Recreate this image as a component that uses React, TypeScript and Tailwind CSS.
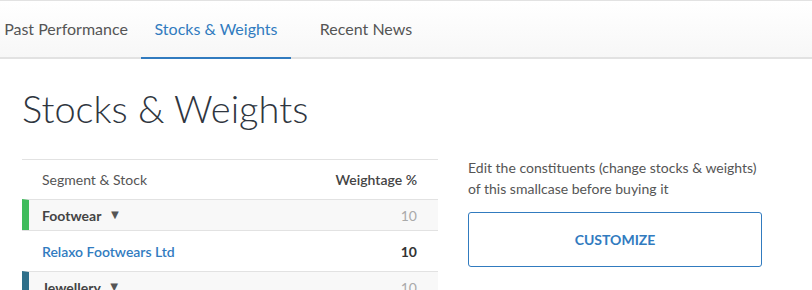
export default function App() {
  const tabs = ["Past Performance", "Stocks & Weights", "Recent News"];

  return (
    <div className="w-[812px] h-[290px] overflow-hidden bg-white font-['Lato',sans-serif] text-[#333]">
      <nav className="flex h-[59px] border-t border-[#e2e2e2] border-b-2 bg-gradient-to-b from-white to-[#f7f7f7]">
        <div className="-ml-[9px] flex">
          {tabs.map((t, i) => (
            <div
              key={t}
              className={[
                "-mb-[2px] flex w-[150px] items-center justify-center pb-[1px] text-[16px]",
                i === 1
                  ? "border-b-2 border-[#317bbf] text-[#317bbf]"
                  : "border-b-2 border-transparent text-[#555]",
              ].join(" ")}
            >
              {t}
            </div>
          ))}
        </div>
      </nav>

      <h1 className="pl-[22px] pt-[24px] text-[38px] font-light leading-[50px] text-[#2f3640]">
        Stocks &amp; Weights
      </h1>

      <div className="mt-[26px] flex">
        <div className="ml-[22px] w-[416px] border-t border-[#e2e2e2] text-[14px]">
          <div className="flex h-[39px] items-center justify-between pl-[20px] pr-[21px] text-[#555]">
            <span>Segment &amp; Stock</span>
            <span className="font-semibold text-[#444]">Weightage %</span>
          </div>

          <div className="flex h-[31px] items-center justify-between border-t border-[#e2e2e2] border-l-[7px] border-l-[#3fbc5c] bg-[#f8f8f8] pl-[13px] pr-[21px]">
            <span className="flex items-center font-bold text-[#444]">
              Footwear <span className="ml-[7px] text-[13px] text-[#555]">▼</span>
            </span>
            <span className="text-[#aaa]">10</span>
          </div>

          <div className="flex h-[41px] items-center justify-between border-t border-[#e2e2e2] pl-[20px] pr-[21px]">
            <span className="font-semibold text-[#317bbf]">Relaxo Footwears Ltd</span>
            <span className="font-bold text-[#333]">10</span>
          </div>

          <div className="flex h-[31px] items-center justify-between border-t border-[#e2e2e2] border-l-[7px] border-l-[#2e6f8a] bg-[#f8f8f8] pl-[13px] pr-[21px]">
            <span className="flex items-center font-bold text-[#444]">
              Jewellery <span className="ml-[7px] text-[13px] text-[#555]">▼</span>
            </span>
            <span className="text-[#aaa]">10</span>
          </div>
        </div>

        <div className="ml-[30px] w-[300px]">
          <p className="text-[14px] leading-[21px] text-[#555] -mt-[2px]">
            Edit the constituents (change stocks &amp; weights)
            <br />
            of this smallcase before buying it
          </p>
          <button
            type="button"
            className="mt-[13px] flex h-[55px] w-[294px] items-center justify-center rounded-[3px] border border-[#317bbf] text-[14px] font-bold text-[#317bbf]"
          >
            CUSTOMIZE
          </button>
        </div>
      </div>
    </div>
  );
}
